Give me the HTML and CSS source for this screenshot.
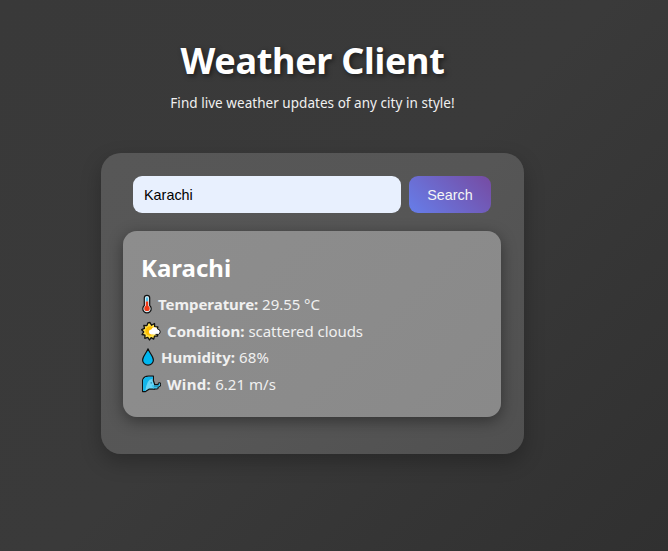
FILE: index.html
```html
<!DOCTYPE html>
<html lang="en">
<head>
<meta charset="utf-8">
<title>Weather Client</title>
<link rel="stylesheet" href="styles.css">
</head>
<body>
<main class="page">
  <header class="header">
    <h1 class="title">Weather Client</h1>
    <p class="tagline">Find live weather updates of any city in style!</p>
  </header>
  <section class="panel">
    <form class="search">
      <input class="city-input" type="text" value="Karachi" aria-label="City">
      <button class="search-button" type="button">Search</button>
    </form>
    <article class="result">
      <h2 class="city">Karachi</h2>
      <p class="row temperature">
        <svg class="icon narrow" viewBox="0 0 12 20"><path d="M3.3 4a2.7 2.7 0 0 1 5.4 0v7.5a4.2 4.2 0 1 1-5.4 0z" fill="#d9edf5" stroke="#111" stroke-width="1.2"/><path d="M6 3.5v4" stroke="#55c5ee" stroke-width="2.2"/><path d="M6 7.5v6" stroke="#f03a17" stroke-width="2.4"/><circle cx="6" cy="14.4" r="2.7" fill="#f03a17"/></svg>
        <span class="text"><strong>Temperature:</strong> 29.55 °C</span>
      </p>
      <p class="row condition">
        <svg class="icon wide" viewBox="0 0 20 20"><path d="M9 1.5l1.5 2.7 3-1.7.2 3.2 3.2.2-1 3 2 1.6-2.1 1.5.9 3-3.2.1-.8 3-2.6-1.5L8.5 19l-1.7-2.6-3 .9.2-3.1-3-.7 1.7-2.6L.7 8.7l2.8-1.3L2.8 4.3l3.1.3 1-2.8z" fill="#ffe14a" stroke="#111" stroke-width="1.3" stroke-linejoin="round"/><circle cx="9" cy="10" r="4.7" fill="#ffbd00"/><path d="M10.5 13.4a2.5 2.5 0 0 1-.2-5 3.5 3.5 0 0 1 6.2-.4 2.8 2.8 0 0 1 .9 5.4z" fill="#fff"/><path d="M16.5 8a2.8 2.8 0 0 1 .9 5.4H14.5" fill="none" stroke="#111" stroke-width="1"/></svg>
        <span class="text"><strong>Condition:</strong> scattered clouds</span>
      </p>
      <p class="row humidity">
        <svg class="icon drop" viewBox="0 0 14 20"><path d="M7 1.8C5.5 6 1.6 9.5 1.6 13a5.4 5.1 0 0 0 10.8 0C12.4 9.5 8.5 6 7 1.8z" fill="#00b7f0" stroke="#111" stroke-width="1.2" stroke-linejoin="round"/></svg>
        <span class="text"><strong>Humidity:</strong> 68%</span>
      </p>
      <p class="row wind">
        <svg class="icon wide" viewBox="0 0 20 20"><path d="M13 11.8h4.2q1.5-.3 1.2-1.8M13 13.8h3" fill="none" stroke="#111" stroke-width="3.4" stroke-linecap="round"/><path d="M1.6 17.6V6Q3 2.2 7.5 2.2h4.9v4.6l1.2 3.2v5.2H8L4.5 17.6z" fill="#67d5f6" stroke="#111" stroke-width="1.2" stroke-linejoin="round"/><path d="M2.2 17V6Q3.7 2.8 7.5 2.8h4.3V5Q8.5 4.6 6.8 8T4.2 17z" fill="#12b5ea"/><path d="M10.2 8v1.7" stroke="#187a9b" stroke-width=".9"/><path d="M11.5 11.9h5.7q1.5-.2 1.2-1.8M12.5 13.7H16" fill="none" stroke="#35c2ee" stroke-width="1.5" stroke-linecap="round"/></svg>
        <span class="text"><strong>Wind:</strong> 6.21 m/s</span>
      </p>
    </article>
  </section>
</main>
</body>
</html>
```
FILE: styles.css
```css
* { box-sizing: border-box; }
body {
  margin: 0;
  height: 551px;
  overflow: hidden;
  background: linear-gradient(135deg, #393939 0%, #3a3a3a 50%, #303030 100%);
  color: #fff;
  font-family: "Segoe UI", "Noto Sans", sans-serif;
}
.page {
  width: 625px;
  padding-top: 36px;
  display: flex;
  flex-direction: column;
  align-items: center;
}
.header { height: 117px; text-align: center; white-space: nowrap; }
.title {
  margin: 0;
  font-size: 36px;
  line-height: 50px;
  font-weight: 700;
  letter-spacing: -0.3px;
  text-shadow: 2px 2px 5px rgba(0, 0, 0, .5);
}
.tagline { margin: 7px 0 0; font-size: 13.5px; line-height: 20px; letter-spacing: 0.04px; color: #f0f0f0; }
.panel {
  width: 423px;
  height: 301px;
  padding: 23px 22px 0;
  border-radius: 20px;
  background: linear-gradient(135deg, #575757, #565656 55%, #505050);
  box-shadow: 0 8px 20px rgba(0, 0, 0, .25);
}
.search { display: flex; gap: 8px; margin: 0 0 18px 10px; }
.city-input {
  width: 268px;
  height: 37px;
  padding: 0 11px;
  border: 0;
  border-radius: 9px;
  background: #e8f0fe;
  color: #000;
  font: 14.4px "Liberation Sans", sans-serif;
}
.search-button {
  width: 82px;
  height: 37px;
  padding: 0;
  border: 0;
  border-radius: 9px;
  background: linear-gradient(45deg, #667eea, #764ba2);
  color: #f5f5f5;
  font: 14.4px "Liberation Sans", sans-serif;
}
.result {
  width: 378px;
  height: 186px;
  padding: 18px;
  border-radius: 14px;
  background: linear-gradient(135deg, #8d8d8d, #8b8b8b 60%, #898989);
  box-shadow: 0 4px 15px rgba(0, 0, 0, .4);
}
.city { margin: 0; padding-top: 1px; height: 42px; font-size: 24px; line-height: 36px; font-weight: 700; }
.row { display: flex; align-items: center; height: 26.6px; margin: 0; font-size: 15px; color: #f0f0f0; white-space: nowrap; }
.icon { height: 20px; flex: none; }
.narrow { width: 12px; margin: 0 5px 0 0; }
.wide { width: 20px; margin-right: 6px; }
.drop { width: 14px; margin-right: 6px; }
.text { letter-spacing: -0.05px; }
.condition strong { letter-spacing: 0.05px; }
.humidity .text { letter-spacing: 0.1px; }
.humidity strong { letter-spacing: 0.05px; }
.wind .text { letter-spacing: 0.05px; }
.wind strong { letter-spacing: 0.35px; }
```
